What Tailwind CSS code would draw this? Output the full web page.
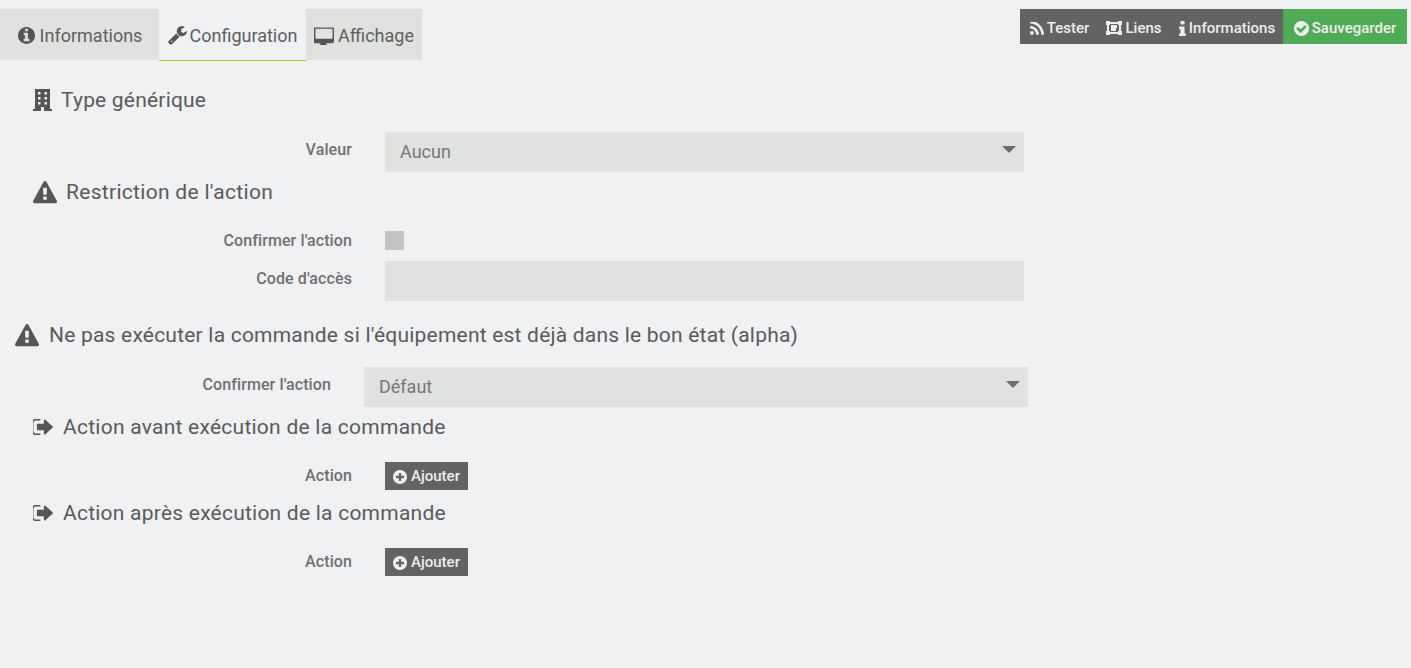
<!DOCTYPE html>
<html lang="fr">
<head>
  <meta charset="UTF-8" />
  <meta name="viewport" content="width=device-width, initial-scale=1.0"/>
  <title>Configuration commande</title>
  <script src="https://cdn.jsdelivr.net/npm/@tailwindcss/browser@4"></script>
</head>
<body class="bg-[#f0f1f3] min-h-screen overflow-hidden font-['Roboto',sans-serif] text-[#5a5a5a]">

  <!-- HEADER -->
  <div class="flex justify-between items-start pt-[9px] pr-[4px]">
    <div class="flex text-[18px] text-[#5f5f5f]">
      <a class="w-[159px] h-[51px] bg-[#e0e2e0] flex items-center justify-center gap-[5px] pt-[2px] pl-[1px]">
        <svg class="w-[17px] h-[17px] fill-[#555555]" viewBox="128 128 1536 1536"><path d="M1152 1376v-160q0-14-9-23t-23-9h-96v-512q0-14-9-23t-23-9h-320q-14 0-23 9t-9 23v160q0 14 9 23t23 9h96v320h-96q-14 0-23 9t-9 23v160q0 14 9 23t23 9h448q14 0 23-9t9-23zm-128-896v-160q0-14-9-23t-23-9h-192q-14 0-23 9t-9 23v160q0 14 9 23t23 9h192q14 0 23-9t9-23zm640 416q0 209-103 385.500t-279.500 279.500-385.500 103-385.500-103-279.500-279.500-103-385.500 103-385.500 279.500-279.500 385.500-103 385.500 103 279.500 279.500 103 385.500z"/></svg>
        Informations
      </a>
      <a class="w-[147px] h-[52px] border-b border-[#93ca02] flex items-center justify-center gap-[3px] pt-[1px]">
        <svg class="w-[19px] h-[19px] fill-[#555555]" viewBox="64 128 1664 1664"><path d="M448 1472q0-26-19-45t-45-19-45 19-19 45 19 45 45 19 45-19 19-45zm644-420l-682 682q-37 37-90 37-52 0-91-37l-106-108q-38-36-38-90 0-53 38-91l681-681q39 98 114.500 173.500t173.500 114.500zm634-435q0 39-23 106-47 134-164.500 217.500t-258.500 83.500q-185 0-316.500-131.500t-131.500-316.500 131.500-316.500 316.500-131.500q58 0 121.500 16.500t107.500 46.500q16 11 16 28t-16 28l-293 169v224l193 107q5-3 79-48.500t135.500-81 70.500-35.500q15 0 23.500 10t8.500 25z"/></svg>
        Configuration
      </a>
      <a class="w-[116px] h-[51px] bg-[#e0e2e0] flex items-center justify-center gap-[4px] pt-[2px]">
        <svg class="w-[20px] h-[18px] fill-[#555555]" viewBox="0 128 1792 1536"><path d="M1664 992v-832q0-13-9.500-22.500t-22.500-9.500h-1472q-13 0-22.500 9.500t-9.500 22.500v832q0 13 9.500 22.500t22.500 9.500h1472q13 0 22.500-9.500t9.500-22.500zm128-832v1088q0 66-47 113t-113 47h-544q0 37 16 77.500t32 71 16 43.500q0 26-19 45t-45 19h-512q-26 0-45-19t-19-45q0-14 16-44t32-70 16-78h-544q-66 0-113-47t-47-113v-1088q0-66 47-113t113-47h1632q66 0 113 47t47 113z" transform="translate(0 128)"/></svg>
        Affichage
      </a>
    </div>

    <div class="flex h-[35px] text-[15px] font-medium text-[#eeeeee]">
      <a class="w-[78px] bg-[#636363] flex items-center justify-center gap-[3px] pt-[3px] pl-[1px]">
        <svg class="w-[14px] h-[13px] fill-[#eeeeee]" viewBox="192 256 1408 1280"><path d="M576 1344q0 80-56 136t-136 56-136-56-56-136 56-136 136-56 136 56 56 136zm512 123q2 28-17 48-18 21-47 21h-135q-25 0-43-16.500t-20-41.500q-22-229-184.500-391.500t-391.500-184.500q-25-2-41.500-20t-16.500-43v-135q0-29 21-47 17-17 43-17h5q160 13 306 80.500t259 181.500q114 113 181.500 259t80.500 306zm512 2q2 27-18 47-18 20-46 20h-143q-26 0-44.500-17.500t-19.500-42.500q-12-215-101-408.500t-231.500-336-336-231.500-408.500-102q-25-1-42.500-19.500t-17.500-43.500v-143q0-28 20-46 18-18 44-18h3q262 13 501.500 120t425.500 294q187 186 294 425.500t120 501.500z"/></svg>
        Tester
      </a>
      <a class="w-[72px] bg-[#636363] flex items-center justify-center gap-[3px] pt-[3px]">
        <svg class="w-[16px] h-[14px] fill-[#eeeeee]" viewBox="0 0 16 14"><path fill-rule="evenodd" d="M0 0h4v1h8V0h4v4h-1v6h1v4h-4v-1H4v1H0v-4h1V4H0zM4 3v1H3v6h1v1h8v-1h1V4h-1V3zM5 4h6v3h-1v3H5z"/></svg>
        Liens
      </a>
      <a class="w-[113px] bg-[#636363] flex items-center justify-center gap-[3px] pt-[3px] pl-[1px]">
        <svg class="w-[7px] h-[15px] fill-[#eeeeee]" viewBox="576 128 640 1408"><path d="M1216 1344v128q0 26-19 45t-45 19h-512q-26 0-45-19t-19-45v-128q0-26 19-45t45-19h64v-384h-64q-26 0-45-19t-19-45v-128q0-26 19-45t45-19h384q26 0 45 19t19 45v576h64q26 0 45 19t19 45zm-128-1152v192q0 26-19 45t-45 19h-256q-26 0-45-19t-19-45v-192q0-26 19-45t45-19h256q26 0 45 19t19 45z"/></svg>
        Informations
      </a>
      <a class="w-[124px] bg-[#50ac54] flex items-center justify-center gap-[3px] pt-[3px]">
        <svg class="w-[15px] h-[15px] fill-[#eeeeee]" viewBox="128 128 1536 1536"><path d="M1412 734q0-28-18-46l-91-90q-19-19-45-19t-45 19l-408 407-226-226q-19-19-45-19t-45 19l-91 90q-18 18-18 46 0 27 18 45l362 362q19 19 45 19 27 0 46-19l543-543q18-18 18-45zm252 162q0 209-103 385.500t-279.500 279.500-385.500 103-385.500-103-279.500-279.500-103-385.500 103-385.500 279.500-279.500 385.500-103 385.500 103 279.500 279.500 103 385.500z"/></svg>
        Sauvegarder
      </a>
    </div>
  </div>

  <!-- FORMULAIRE -->
  <div class="mt-[19px] w-[1028px]">

    <!-- TYPE GENERIQUE -->
    <div class="h-[40px] mb-[12px] pl-[33px] pt-[2px] flex items-center gap-[9px] text-[21px] tracking-[0.2px]">
      <svg class="w-[19px] h-[22px] -mt-[2px] fill-[#555555]" viewBox="0 0 19 22"><path fill-rule="evenodd" d="M2 0h15v20h2v2H11v-4H8v4H0v-2h2zM5 3v2.500h2.500V3zM11.500 3v2.500H14V3zM5 8v2.500h2.500V8zM11.500 8v2.500H14V8zM5 13v2.500h2.500V13zM11.500 13v2.500H14V13z"/></svg>
      <span>Type générique</span>
    </div>
    <div class="flex">
      <label class="w-[352px] text-right text-[16px] font-medium tracking-[0.1px] text-[#707070] pt-[6px]">Valeur</label>
      <div class="relative ml-[33px] w-[639px] h-[40px] bg-[#e0e2e0] flex items-center pl-[15px] pb-[2px] text-[18px] text-[#777777]">
        Aucun
        <span class="absolute right-[8px] top-[14px] border-x-[7px] border-t-[7px] border-x-transparent border-t-[#6e6e6e]"></span>
      </div>
    </div>

    <!-- RESTRICTION -->
    <div class="h-[40px] mb-[12px] pl-[33px] pt-[2px] flex items-center gap-[9px] text-[21px] tracking-[0.3px]">
      <svg class="w-[24px] h-[24px] fill-[#555555]" viewBox="0 0 1792 1792"><path d="M1024 1375v-190q0-14-9.500-23.500t-22.500-9.500h-192q-13 0-22.500 9.500t-9.500 23.500v190q0 14 9.500 23.500t22.500 9.500h192q13 0 22.500-9.500t9.500-23.500zm-2-374l18-459q0-12-10-19-13-11-24-11h-220q-11 0-24 11-10 7-10 21l17 457q0 10 10 16.500t24 6.500h185q14 0 23.500-6.500t10.500-16.500zm-14-934l768 1408q35 63-2 126-17 29-46.500 46t-63.500 17h-1536q-34 0-63.500-17t-46.500-46q-37-63-2-126l768-1408q17-31 47-49t65-18 65 18 47 49z"/></svg>
      <span>Restriction de l'action</span>
    </div>
    <div class="flex h-[32px] mb-[5px] items-center">
      <label class="w-[352px] text-right text-[16px] font-medium tracking-[0.1px] text-[#707070] pt-[1px]">Confirmer l'action</label>
      <span class="ml-[33px] w-[19px] h-[19px] bg-[#c3c3c3] block"></span>
    </div>
    <div class="flex">
      <label class="w-[352px] text-right text-[16px] font-medium tracking-[0.1px] text-[#707070] pt-[6px]">Code d'accès</label>
      <div class="ml-[33px] w-[639px] h-[40px] bg-[#e0e2e0]"></div>
    </div>

    <!-- DEJA DANS LE BON ETAT -->
    <div class="h-[40px] mt-[14px] mb-[12px] pl-[15px] pt-[2px] flex items-center gap-[10px] text-[21px] tracking-[0.21px]">
      <svg class="w-[24px] h-[24px] fill-[#555555]" viewBox="0 0 1792 1792"><path d="M1024 1375v-190q0-14-9.500-23.500t-22.500-9.500h-192q-13 0-22.500 9.500t-9.500 23.500v190q0 14 9.500 23.500t22.500 9.500h192q13 0 22.500-9.500t9.500-23.500zm-2-374l18-459q0-12-10-19-13-11-24-11h-220q-11 0-24 11-10 7-10 21l17 457q0 10 10 16.500t24 6.500h185q14 0 23.500-6.500t10.500-16.500zm-14-934l768 1408q35 63-2 126-17 29-46.500 46t-63.500 17h-1536q-34 0-63.500-17t-46.500-46q-37-63-2-126l768-1408q17-31 47-49t65-18 65 18 47 49z"/></svg>
      <span>Ne pas exécuter la commande si l'équipement est déjà dans le bon état (alpha)</span>
    </div>
    <div class="flex">
      <label class="w-[331px] text-right text-[16px] font-medium tracking-[0.1px] text-[#707070] pt-[6px]">Confirmer l'action</label>
      <div class="relative ml-[33px] w-[664px] h-[40px] bg-[#e0e2e0] flex items-center pl-[15px] pb-[2px] text-[18px] text-[#777777]">
        Défaut
        <span class="absolute right-[8px] top-[14px] border-x-[7px] border-t-[7px] border-x-transparent border-t-[#6e6e6e]"></span>
      </div>
    </div>

    <!-- ACTION AVANT -->
    <div class="h-[40px] mb-[12px] pl-[33px] pt-[2px] flex items-center gap-[10px] text-[21px] tracking-[0.25px]">
      <svg class="w-[20px] h-[16px] -mt-[2px] fill-[#555555]" preserveAspectRatio="none" viewBox="160 256 1472 1280"><path d="M704 1440q0 4 1 20t.5 26.500-3 23.500-10 19.500-20.500 6.500h-320q-119 0-203.500-84.500t-84.500-203.500v-704q0-119 84.500-203.500t203.500-84.500h320q13 0 22.500 9.500t9.500 22.500q0 4 1 20t.5 26.500-3 23.500-10 19.500-20.500 6.500h-320q-66 0-113 47t-47 113v704q0 66 47 113t113 47h312l11.500 1 11.500 3 8 5.500 7 9 2 13.500zm928-544q0 26-19 45l-544 544q-19 19-45 19t-45-19-19-45v-288h-448q-26 0-45-19t-19-45v-384q0-26 19-45t45-19h448v-288q0-26 19-45t45-19 45 19l544 544q19 19 19 45z"/></svg>
      <span>Action avant exécution de la commande</span>
    </div>
    <div class="flex h-[34px] items-start">
      <label class="w-[352px] text-right text-[16px] font-medium tracking-[0.1px] text-[#707070] pt-[5px]">Action</label>
      <button class="ml-[33px] mt-[3px] w-[83px] h-[28px] bg-[#636363] text-[#eeeeee] text-[15px] font-medium flex items-center justify-center gap-[4px] pt-[1px]">
        <svg class="w-[14px] h-[14px] fill-[#eeeeee]" viewBox="128 128 1536 1536"><path d="M1344 960v-128q0-26-19-45t-45-19h-256v-256q0-26-19-45t-45-19h-128q-26 0-45 19t-19 45v256h-256q-26 0-45 19t-19 45v128q0 26 19 45t45 19h256v256q0 26 19 45t45 19h128q26 0 45-19t19-45v-256h256q26 0 45-19t19-45zm320-64q0 209-103 385.500t-279.500 279.500-385.500 103-385.500-103-279.500-279.500-103-385.500 103-385.500 279.500-279.500 385.500-103 385.500 103 279.500 279.500 103 385.500z"/></svg>
        Ajouter
      </button>
    </div>

    <!-- ACTION APRES -->
    <div class="h-[40px] mb-[12px] pl-[33px] pt-[2px] flex items-center gap-[10px] text-[21px] tracking-[0.23px]">
      <svg class="w-[20px] h-[16px] -mt-[2px] fill-[#555555]" preserveAspectRatio="none" viewBox="160 256 1472 1280"><path d="M704 1440q0 4 1 20t.5 26.500-3 23.500-10 19.500-20.500 6.500h-320q-119 0-203.500-84.500t-84.500-203.500v-704q0-119 84.500-203.500t203.500-84.500h320q13 0 22.500 9.500t9.500 22.500q0 4 1 20t.5 26.500-3 23.500-10 19.500-20.500 6.500h-320q-66 0-113 47t-47 113v704q0 66 47 113t113 47h312l11.500 1 11.500 3 8 5.500 7 9 2 13.500zm928-544q0 26-19 45l-544 544q-19 19-45 19t-45-19-19-45v-288h-448q-26 0-45-19t-19-45v-384q0-26 19-45t45-19h448v-288q0-26 19-45t45-19 45 19l544 544q19 19 19 45z"/></svg>
      <span>Action après exécution de la commande</span>
    </div>
    <div class="flex h-[34px] items-start">
      <label class="w-[352px] text-right text-[16px] font-medium tracking-[0.1px] text-[#707070] pt-[5px]">Action</label>
      <button class="ml-[33px] mt-[3px] w-[83px] h-[28px] bg-[#636363] text-[#eeeeee] text-[15px] font-medium flex items-center justify-center gap-[4px] pt-[1px]">
        <svg class="w-[14px] h-[14px] fill-[#eeeeee]" viewBox="128 128 1536 1536"><path d="M1344 960v-128q0-26-19-45t-45-19h-256v-256q0-26-19-45t-45-19h-128q-26 0-45 19t-19 45v256h-256q-26 0-45 19t-19 45v128q0 26 19 45t45 19h256v256q0 26 19 45t45 19h128q26 0 45-19t19-45v-256h256q26 0 45-19t19-45zm320-64q0 209-103 385.500t-279.500 279.500-385.500 103-385.500-103-279.500-279.500-103-385.500 103-385.500 279.500-279.500 385.500-103 385.500 103 279.500 279.500 103 385.500z"/></svg>
        Ajouter
      </button>
    </div>
  </div>

</body>
</html>
